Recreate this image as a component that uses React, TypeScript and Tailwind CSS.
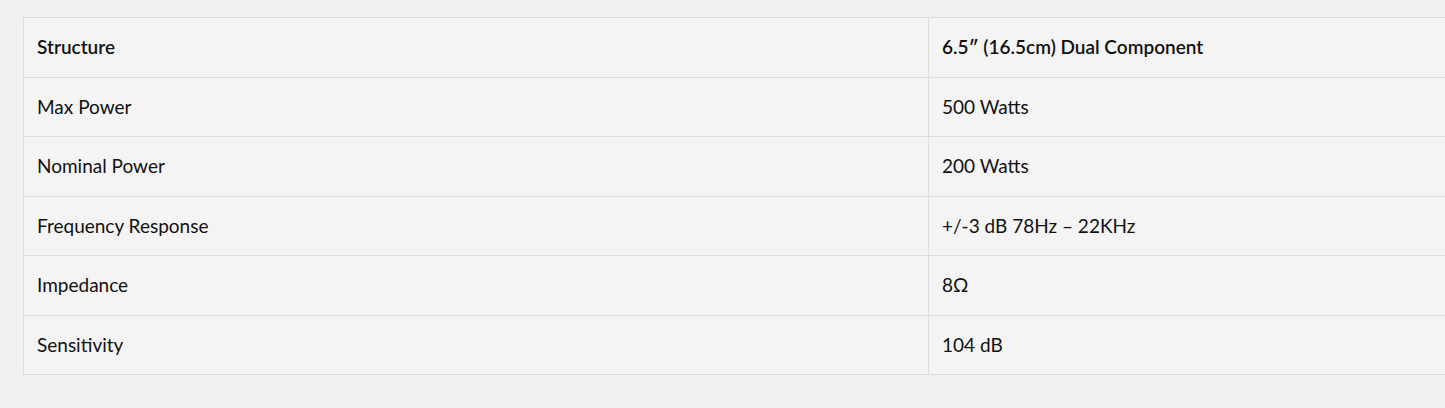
const rows: [string, string, string][] = [
  ["Max Power", "500 Watts", "h-[59px]"],
  ["Nominal Power", "200 Watts", "h-[60px]"],
  ["Frequency Response", "+/-3 dB 78Hz – 22KHz", "h-[59px]"],
  ["Impedance", "8Ω", "h-[60px]"],
  ["Sensitivity", "104 dB", "h-[59px]"],
];

export default function App() {
  return (
    <div className="w-[1445px] h-[408px] overflow-hidden bg-[#f1f1f1] pt-[17px] pl-[23px] font-['Lato','Open_Sans',sans-serif] text-[#111]">
      <table className="w-[1500px] border-collapse bg-[#f4f4f4] text-[19px]">
        <colgroup>
          <col className="w-[905px]" />
          <col />
        </colgroup>
        <tbody>
          <tr className="h-[60px]">
            <td className="border border-[#dcdcdc] pl-[13px] pr-[14px] font-semibold">Structure</td>
            <td className="border border-[#dcdcdc] pl-[13px] pr-[14px] font-semibold">6.5″ (16.5cm) Dual Component</td>
          </tr>
          {rows.map(([k, v, h]) => (
            <tr key={k} className={h}>
              <td className="border border-[#dcdcdc] pl-[13px] pr-[14px]">{k}</td>
              <td className="border border-[#dcdcdc] pl-[13px] pr-[14px]">{v}</td>
            </tr>
          ))}
        </tbody>
      </table>
    </div>
  );
}
